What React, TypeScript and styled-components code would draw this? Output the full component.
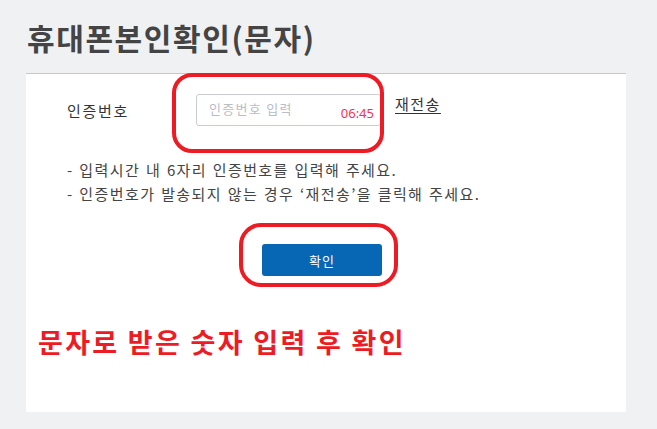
import React from "react";
import styled, { createGlobalStyle } from "styled-components";

const Global = createGlobalStyle`
  html, body { margin: 0; padding: 0; }
  body {
    background: #f0f1f3;
    font-family: "Noto Sans CJK KR", "Noto Sans", sans-serif;
    color: #333;
  }
`;

const Page = styled.div`
  width: 657px;
  height: 429px;
  padding-top: 18px;
  box-sizing: border-box;
`;

const Title = styled.h1`
  margin: 0 0 0 27px;
  font-size: 30px;
  line-height: 38px;
  font-weight: 700;
  color: #444;
  letter-spacing: 1.6px;
`;

const Panel = styled.div`
  position: relative;
  margin: 17px 0 0 26px;
  width: 600px;
  height: 339px;
  box-sizing: border-box;
  background: #fff;
  border-top: 1px solid #c6c8cc;
  padding: 20px 0 0 41px;
`;

const Row = styled.div`
  display: flex;
  align-items: center;
`;

const Label = styled.div`
  width: 129px;
  font-size: 15px;
  letter-spacing: 1.7px;
  color: #333;
`;

const InputBox = styled.div`
  position: relative;
  width: 185px;
  height: 32px;
  box-sizing: border-box;
  border: 1px solid #c9ccd2;
  border-radius: 3px;
  display: flex;
  align-items: center;
  padding-left: 12px;
`;

const Placeholder = styled.span`
  font-size: 13px;
  color: #b9bdc5;
  letter-spacing: 1.3px;
  margin-top: -4px;
`;

const Timer = styled.span`
  position: absolute;
  right: 6px;
  bottom: 3px;
  font-size: 13px;
  color: #f5334f;
  font-family: "Noto Sans", sans-serif;
`;

const Resend = styled.a`
  align-self: flex-start;
  margin: 0 0 0 14px;
  font-size: 15px;
  line-height: 20px;
  color: #333;
  text-decoration: underline;
  text-underline-offset: 3px;
  letter-spacing: 1.5px;
`;

const Notes = styled.ul`
  list-style: none;
  margin: 32px 0 0;
  padding: 0;
`;

const Note = styled.li`
  font-size: 15px;
  line-height: 24px;
  color: #444;
  letter-spacing: 1.4px;
  word-spacing: 1px;
`;

const ButtonRow = styled.div`
  display: flex;
  padding-left: 195px;
  margin-top: 38px;
`;

const Confirm = styled.button`
  width: 120px;
  height: 32px;
  border: none;
  border-radius: 3px;
  background: #0867b5;
  color: #fff;
  font-family: inherit;
  font-size: 13px;
  letter-spacing: 1px;
  cursor: pointer;
`;

const Annotation = styled.div`
  margin: 50px 0 0 -29px;
  font-size: 27px;
  line-height: 32px;
  font-weight: 700;
  color: #ed1c24;
  letter-spacing: 2.3px;
`;

const Circle = styled.div<{ $l: number; $t: number; $w: number; $h: number; $r: number }>`
  position: absolute;
  left: ${(p) => p.$l}px;
  top: ${(p) => p.$t}px;
  width: ${(p) => p.$w}px;
  height: ${(p) => p.$h}px;
  border: 4px solid #ed1c24;
  border-radius: ${(p) => p.$r}px;
  box-sizing: border-box;
  pointer-events: none;
`;

export default function App() {
  return (
    <Page>
      <Global />
      <Title>휴대폰본인확인(문자)</Title>
      <Panel>
        <Row>
          <Label>인증번호</Label>
          <InputBox>
            <Placeholder>인증번호 입력</Placeholder>
            <Timer>06:45</Timer>
          </InputBox>
          <Resend>재전송</Resend>
        </Row>
        <Notes>
          <Note>- 입력시간 내 6자리 인증번호를 입력해 주세요.</Note>
          <Note>- 인증번호가 발송되지 않는 경우 ‘재전송’을 클릭해 주세요.</Note>
        </Notes>
        <ButtonRow>
          <Confirm>확인</Confirm>
        </ButtonRow>
        <Annotation>문자로 받은 숫자 입력 후 확인</Annotation>
        <Circle $l={146} $t={-1} $w={212} $h={80} $r={20} />
        <Circle $l={213} $t={149} $w={159} $h={64} $r={22} />
      </Panel>
    </Page>
  );
}
